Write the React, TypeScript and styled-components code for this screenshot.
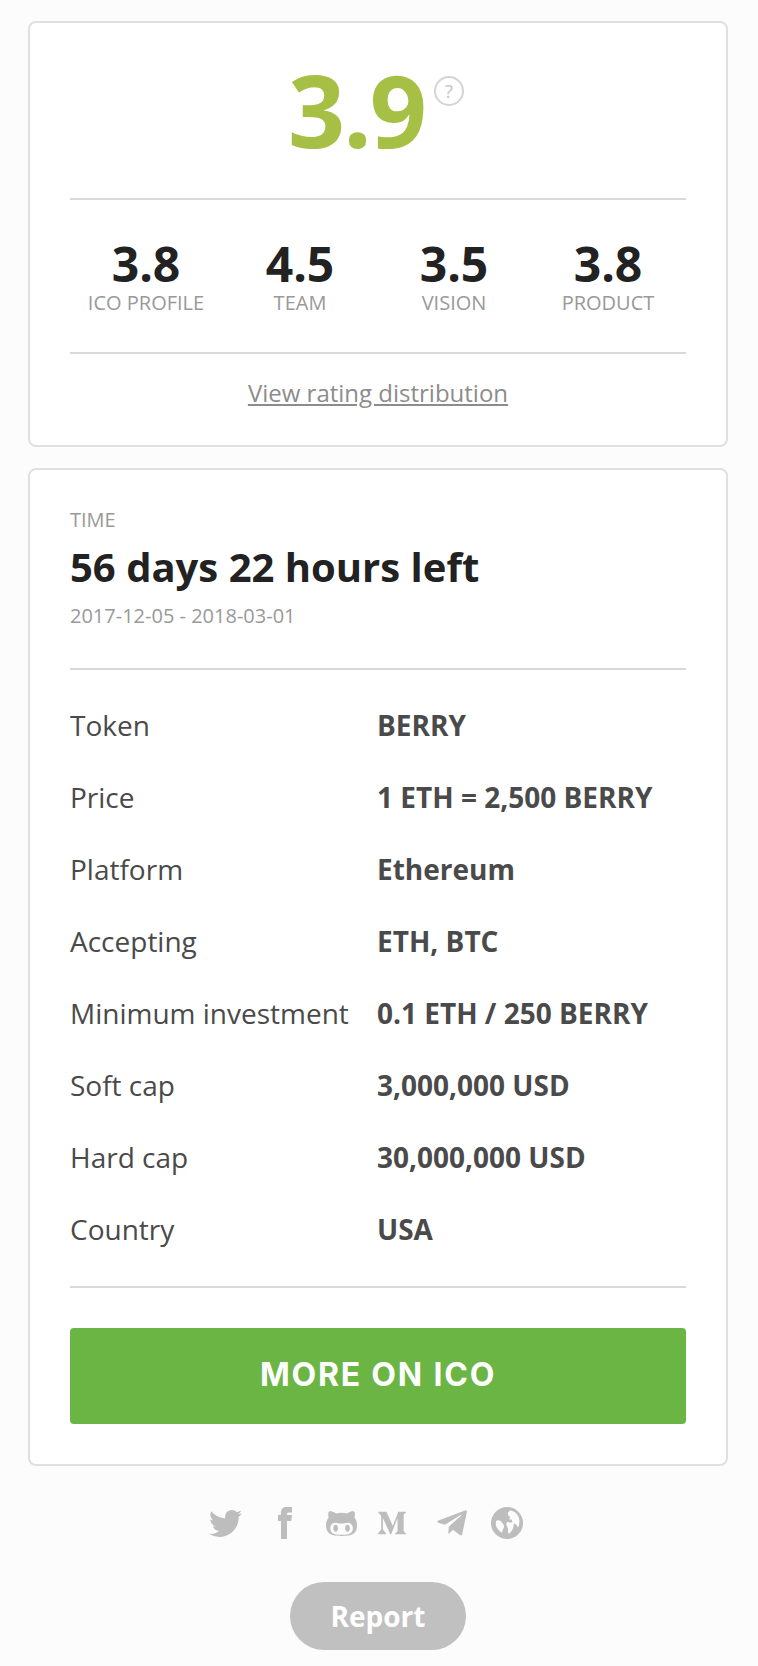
import * as React from 'react';
import styled, { createGlobalStyle } from 'styled-components';
import { FaTwitter, FaGithubAlt, FaMediumM, FaTelegramPlane } from 'react-icons/fa';

const SCORES = [
    { value: '3.8', label: 'ICO PROFILE' },
    { value: '4.5', label: 'TEAM' },
    { value: '3.5', label: 'VISION' },
    { value: '3.8', label: 'PRODUCT' },
];

const DETAILS = [
    { label: 'Token', value: 'BERRY' },
    { label: 'Price', value: '1 ETH = 2,500 BERRY' },
    { label: 'Platform', value: 'Ethereum' },
    { label: 'Accepting', value: 'ETH, BTC' },
    { label: 'Minimum investment', value: '0.1 ETH / 250 BERRY' },
    { label: 'Soft cap', value: '3,000,000 USD' },
    { label: 'Hard cap', value: '30,000,000 USD' },
    { label: 'Country', value: 'USA' },
];

const FacebookGlyph: React.FC = () => (
    <svg width="15" height="32" viewBox="0 0 15 32" fill="currentColor">
        <path d="M3 32V14H0V8h3V5.500C3 2 5 0 8.500 0H14v5.500h-3C9.500 5.500 9 6.200 9 7.500V8h5l-.7 6H9v18z" />
    </svg>
);

const GlobeGlyph: React.FC = () => (
    <svg width="32" height="32" viewBox="0 0 32 32">
        <circle cx="16" cy="16" r="16" fill="currentColor" />
        <path
            fill="#fcfcfc"
            d="M19 3.500c5 .6 8.600 4.200 9.400 9.500.2 2.600-.2 5.200-1.300 7.300l-3-3.800c-1-.4-1.500 1.200-1.700 3.200-.5 2.600-2 5-4.500 7.200-1-1.500-.8-3.500-1-5.500-.3-2-2-3-1.500-5.200.4-1.500 2.500-1.500 3.500-.5l2.500-.5-.5-2.500-3-.5 1.500-2-2-1.500-.5-3.200z"
        />
        <path fill="#fcfcfc" d="M5 14c2-1.500 4.500-.8 5.500 1 1 1.700 3 2.700 2.500 5-.4 2-1.700 3-2 5.800-3-1.500-5.500-4.800-6.200-8z" />
    </svg>
);

const App: React.FC = () => (
    <Root>
        <GlobalStyle />
        <Card $paddingBottom={36}>
            <Rating>
                <RatingValue>3.9</RatingValue>
                <HelpBadge>?</HelpBadge>
            </Rating>
            <Scores>
                {SCORES.map((score) => (
                    <Score key={score.label}>
                        <ScoreValue>{score.value}</ScoreValue>
                        <ScoreLabel>{score.label}</ScoreLabel>
                    </Score>
                ))}
            </Scores>
            <DistributionLink href="#">View rating distribution</DistributionLink>
        </Card>
        <Card $paddingBottom={40}>
            <TimeBlock>
                <TimeLabel>TIME</TimeLabel>
                <TimeLeft>56 days 22 hours left</TimeLeft>
                <TimeRange>2017-12-05 - 2018-03-01</TimeRange>
            </TimeBlock>
            <DetailList>
                {DETAILS.map((detail) => (
                    <DetailRow key={detail.label}>
                        <DetailLabel>{detail.label}</DetailLabel>
                        <DetailValue>{detail.value}</DetailValue>
                    </DetailRow>
                ))}
            </DetailList>
            <MoreButton href="#">MORE ON ICO</MoreButton>
        </Card>
        <Socials>
            <SocialIcon $size={33} $left={0}><FaTwitter /></SocialIcon>
            <SocialIcon $size={32} $left={36}><FacebookGlyph /></SocialIcon>
            <SocialIcon $size={33} $left={32}><FaGithubAlt /></SocialIcon>
            <SocialIcon $size={30} $left={19}><FaMediumM /></SocialIcon>
            <SocialIcon $size={34} $left={28}><FaTelegramPlane /></SocialIcon>
            <SocialIcon $size={32} $left={22}><GlobeGlyph /></SocialIcon>
        </Socials>
        <ReportButton>Report</ReportButton>
    </Root>
);

const GlobalStyle = createGlobalStyle`
    html, body {
        margin: 0;
        padding: 0;
        background: #fcfcfc;
    }
`;

const Root = styled.div`
    display: flex;
    flex-direction: column;
    align-items: center;
    gap: 21px;
    box-sizing: border-box;
    height: 1666px;
    padding: 21px 2px 0 0;
    font-family: 'Open Sans', sans-serif;
`;

const Card = styled.section<{ $paddingBottom: number }>`
    box-sizing: border-box;
    width: 700px;
    padding: 0 40px ${(props) => props.$paddingBottom}px;
    background: #fff;
    border: 2px solid #e0e0e0;
    border-radius: 8px;
`;

const Rating = styled.div`
    display: flex;
    justify-content: center;
    height: 175px;
    padding-right: 4px;
`;

const RatingValue = styled.div`
    margin-top: 31px;
    font-size: 100px;
    font-weight: 700;
    line-height: 110px;
    letter-spacing: -2px;
    color: #a5c044;
`;

const HelpBadge = styled.span`
    box-sizing: border-box;
    width: 30px;
    height: 30px;
    margin: 53px 0 0 9px;
    border: 2px solid #d4d4d4;
    border-radius: 50%;
    font-size: 19px;
    line-height: 26px;
    text-align: center;
    color: #c4c4c4;
`;

const Scores = styled.div`
    display: grid;
    grid-template-columns: repeat(4, 154px);
    height: 152px;
    border-top: 2px solid #d9d9d9;
    border-bottom: 2px solid #d9d9d9;
`;

const Score = styled.div`
    display: flex;
    flex-direction: column;
    align-items: center;
    padding: 38px 2px 0 0;
`;

const ScoreValue = styled.div`
    font-size: 48px;
    font-weight: 700;
    line-height: 52px;
    color: #222;
`;

const ScoreLabel = styled.div`
    font-size: 20px;
    line-height: 26px;
    color: #999;
`;

const DistributionLink = styled.a`
    display: block;
    margin-top: 23px;
    font-size: 24px;
    line-height: 32px;
    text-align: center;
    text-decoration: underline;
    color: #8c8c8c;
`;

const TimeBlock = styled.div`
    height: 200px;
    padding-top: 38px;
    box-sizing: border-box;
    border-bottom: 2px solid #d9d9d9;
`;

const TimeLabel = styled.div`
    font-size: 20px;
    line-height: 24px;
    color: #999;
`;

const TimeLeft = styled.div`
    margin-top: 9px;
    font-size: 40px;
    font-weight: 700;
    line-height: 52px;
    color: #222;
`;

const TimeRange = styled.div`
    margin-top: 9px;
    font-size: 20px;
    line-height: 28px;
    color: #999;
`;

const DetailList = styled.div`
    padding: 19px 0 21px;
    border-bottom: 2px solid #d9d9d9;
`;

const DetailRow = styled.div`
    display: grid;
    grid-template-columns: 307px 1fr;
    height: 72px;
    align-items: center;
`;

const DetailLabel = styled.div`
    font-size: 28px;
    color: #4a4a4a;
`;

const DetailValue = styled.div`
    font-size: 28px;
    font-weight: 700;
    color: #4a4a4a;
`;

const MoreButton = styled.a`
    display: flex;
    align-items: center;
    justify-content: center;
    box-sizing: border-box;
    height: 96px;
    margin-top: 40px;
    padding-bottom: 3px;
    background: #6ab543;
    border-radius: 4px;
    font-family: Inter, sans-serif;
    font-size: 32px;
    font-weight: 700;
    letter-spacing: 1.8px;
    color: #fff;
    text-decoration: none;
`;

const Socials = styled.div`
    display: flex;
    align-items: center;
    height: 72px;
    margin-right: 24px;
`;

const SocialIcon = styled.a<{ $size: number; $left: number }>`
    display: flex;
    margin-left: ${(props) => props.$left}px;
    font-size: ${(props) => props.$size}px;
    color: #bdbdbd;
`;

const ReportButton = styled.button`
    width: 176px;
    height: 68px;
    margin-top: 2px;
    border: 0;
    border-radius: 34px;
    background: #c0c0c0;
    font-family: 'Open Sans', sans-serif;
    font-size: 28px;
    font-weight: 700;
    color: #fff;
`;

export default App;
